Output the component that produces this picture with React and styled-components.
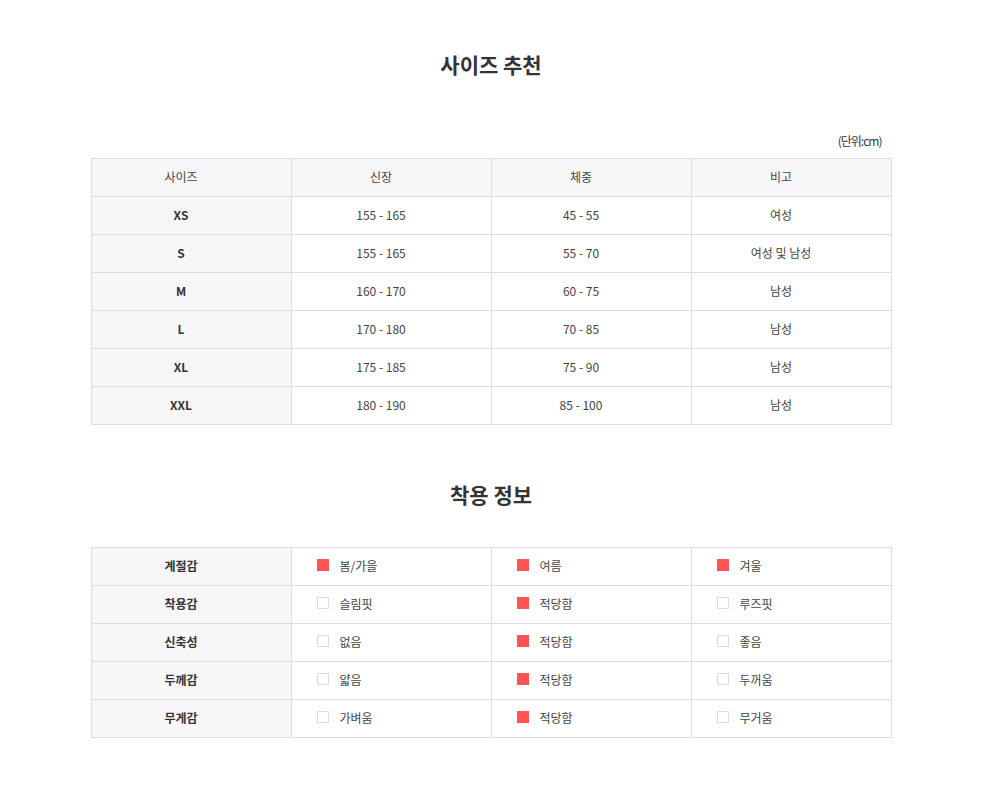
import React from 'react';
import styled, { createGlobalStyle } from 'styled-components';

const GlobalStyle = createGlobalStyle`
  html, body {
    margin: 0;
    padding: 0;
    background: #fff;
  }
  body {
    font-family: "Noto Sans CJK KR", "Noto Sans", sans-serif;
    color: #333;
  }
`;

const Page = styled.div`
  width: 982px;
  padding: 50px 0 64px;
`;

const Section = styled.section`
  width: 801px;
  margin: 0 auto;
  margin-top: ${(p) => p.$top || 0}px;
`;

const Title = styled.h2`
  margin: 0;
  font-size: 21px;
  line-height: 28px;
  font-weight: 700;
  text-align: center;
  color: #333;
`;

const Unit = styled.p`
  margin: 54px 0 0;
  padding-right: 10px;
  font-size: 12px;
  line-height: 18px;
  text-align: right;
  color: #333;
  letter-spacing: -1px;
`;

const Table = styled.table`
  width: 801px;
  margin-top: ${(p) => p.$top}px;
  border-collapse: collapse;
  table-layout: fixed;
  font-size: 12px;
`;

const Cell = styled.td`
  box-sizing: border-box;
  height: 38px;
  padding: 0 20px 2px 0;
  border: 1px solid #ddd;
  text-align: center;
  background: ${(p) => (p.$head ? '#f7f7f9' : '#fff')};
  font-weight: ${(p) => (p.$bold ? 700 : 400)};
  color: ${(p) => (p.$bold ? '#333' : '#444')};
`;

const OptionCell = styled(Cell)`
  text-align: left;
  padding: 0 0 2px 25px;
`;

const Option = styled.span`
  display: inline-flex;
  align-items: center;
  gap: 11px;
`;

const Box = styled.i`
  display: block;
  width: 12px;
  height: 12px;
  box-sizing: border-box;
  background: ${(p) => (p.$on ? '#ff5454' : '#fff')};
  border: 1px solid ${(p) => (p.$on ? '#ff5454' : '#ddd')};
`;

const sizes = [
  ['XS', '155 - 165', '45 - 55', '여성'],
  ['S', '155 - 165', '55 - 70', '여성 및 남성'],
  ['M', '160 - 170', '60 - 75', '남성'],
  ['L', '170 - 180', '70 - 85', '남성'],
  ['XL', '175 - 185', '75 - 90', '남성'],
  ['XXL', '180 - 190', '85 - 100', '남성'],
];

const fit = [
  ['계절감', [['봄/가을', true], ['여름', true], ['겨울', true]]],
  ['착용감', [['슬림핏', false], ['적당함', true], ['루즈핏', false]]],
  ['신축성', [['없음', false], ['적당함', true], ['좋음', false]]],
  ['두께감', [['얇음', false], ['적당함', true], ['두꺼움', false]]],
  ['무게감', [['가벼움', false], ['적당함', true], ['무거움', false]]],
];

export default function App() {
  return (
    <Page>
      <GlobalStyle />
      <Section>
        <Title>사이즈 추천</Title>
        <Unit>(단위:cm)</Unit>
        <Table $top={8}>
          <tbody>
            <tr>
              {['사이즈', '신장', '체중', '비고'].map((h) => (
                <Cell key={h} $head>{h}</Cell>
              ))}
            </tr>
            {sizes.map(([size, height, weight, note]) => (
              <tr key={size}>
                <Cell $head $bold>{size}</Cell>
                <Cell>{height}</Cell>
                <Cell>{weight}</Cell>
                <Cell>{note}</Cell>
              </tr>
            ))}
          </tbody>
        </Table>
      </Section>
      <Section $top={55}>
        <Title>착용 정보</Title>
        <Table $top={39}>
          <tbody>
            {fit.map(([label, opts]) => (
              <tr key={label}>
                <Cell $head $bold>{label}</Cell>
                {opts.map(([text, on], i) => (
                  <OptionCell key={i}>
                    <Option>
                      <Box $on={on} />
                      {text}
                    </Option>
                  </OptionCell>
                ))}
              </tr>
            ))}
          </tbody>
        </Table>
      </Section>
    </Page>
  );
}
